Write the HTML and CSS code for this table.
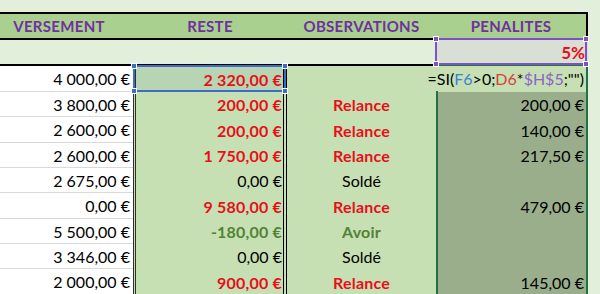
FILE: index.html
```html
<!DOCTYPE html>
<html lang="fr">
<head>
<meta charset="utf-8">
<title>Pénalités</title>
<link rel="stylesheet" href="styles.css">
</head>
<body>
<div class="sheet">
  <div class="cell hd hd-a">VERSEMENT</div>
  <div class="cell hd">RESTE</div>
  <div class="cell hd">OBSERVATIONS</div>
  <div class="cell hd hd-last">PENALITES</div>

  <div class="cell rate"></div>
  <div class="cell rate"></div>
  <div class="cell rate"></div>
  <div class="cell rate rate-h">5%<span class="ref ref-purple"><i class="hdl tl"></i><i class="hdl tr"></i><i class="hdl bl"></i><i class="hdl br"></i></span></div>

  <div class="cell a">4 000,00 €</div>
  <div class="cell f f-ref red">2 320,00 €<span class="ref ref-blue"><i class="hdl tl"></i><i class="hdl tr"></i><i class="hdl bl"></i><i class="hdl br"></i></span></div>
  <div class="cell g"></div>
  <div class="cell h h-active"><span class="editor">=SI(<span class="fb">F6</span>&gt;0;<span class="fr">D6</span>*<span class="fp">$H$5</span>;"")</span></div>

  <div class="cell a">3 800,00 €</div>
  <div class="cell f red">200,00 €</div>
  <div class="cell g red">Relance</div>
  <div class="cell h">200,00 €</div>

  <div class="cell a">2 600,00 €</div>
  <div class="cell f red">200,00 €</div>
  <div class="cell g red">Relance</div>
  <div class="cell h">140,00 €</div>

  <div class="cell a">2 600,00 €</div>
  <div class="cell f red">1 750,00 €</div>
  <div class="cell g red">Relance</div>
  <div class="cell h">217,50 €</div>

  <div class="cell a">2 675,00 €</div>
  <div class="cell f">0,00 €</div>
  <div class="cell g">Soldé</div>
  <div class="cell h"></div>

  <div class="cell a">0,00 €</div>
  <div class="cell f red">9 580,00 €</div>
  <div class="cell g red">Relance</div>
  <div class="cell h">479,00 €</div>

  <div class="cell a">5 500,00 €</div>
  <div class="cell f green">-180,00 €</div>
  <div class="cell g green">Avoir</div>
  <div class="cell h"></div>

  <div class="cell a">3 346,00 €</div>
  <div class="cell f">0,00 €</div>
  <div class="cell g">Soldé</div>
  <div class="cell h"></div>

  <div class="cell a">2 000,00 €</div>
  <div class="cell f red">900,00 €</div>
  <div class="cell g red">Relance</div>
  <div class="cell h">145,00 €</div>
</div>
</body>
</html>
```

FILE: styles.css
```css
html, body {
  margin: 0;
  padding: 0;
}
body {
  background: #e2efda;
  font-family: Lato, "Liberation Sans", sans-serif;
  font-size: 16px;
  color: #000;
  overflow: hidden;
}
.sheet {
  display: grid;
  grid-template-columns: 133px 154px 149px 152px;
  grid-template-rows: 28px 26px 26px 25px 26px 25px 25px 26px 25px 25px 26px;
  padding-top: 12px;
  width: 588px;
}
.cell {
  box-sizing: border-box;
  display: flex;
  align-items: center;
  justify-content: flex-end;
  padding-right: 3px;
  white-space: nowrap;
  min-width: 0;
}
.hd {
  background: #a9d08e;
  border-top: 2px solid #000;
  border-bottom: 2px solid #000;
  justify-content: center;
  padding: 0;
  color: #7030a0;
  font-weight: 700;
  font-size: 15px;
  letter-spacing: 0.3px;
}
.hd-a {
  padding-right: 15px;
}
.hd-last {
  border-right: 2px solid #000;
}
.rate {
  background: #e2efda;
  border-bottom: 2px solid #000;
}
.rate-h {
  position: relative;
  background: #dadfd5;
  border-bottom-color: #217346;
  color: #e60f1a;
  font-weight: 700;
  font-size: 17px;
  padding-right: 3px;
}
.a {
  background: #fff;
  border-bottom: 1px solid #d9d9d9;
}
.f {
  background: #c6e0b4;
  border-left: 3px double #2e2e2e;
  border-right: 4px double #000;
  padding-right: 1px;
}
.f-ref {
  position: relative;
  background: #b7d5b2;
}
.g {
  background: #c6e0b4;
  justify-content: center;
  padding: 0;
}
.h {
  position: relative;
  background: #9aae8c;
  border-left: 2px solid #217346;
  border-right: 2px solid #217346;
  padding-right: 2px;
}
.h-active {
  background: #c6e0b4;
}
.red {
  color: #e60f1a;
  font-weight: 700;
  letter-spacing: 0.2px;
}
.green {
  color: #548235;
  font-weight: 700;
  letter-spacing: 0.2px;
}
.ref {
  position: absolute;
  z-index: 2;
  border: 2px solid;
}
.ref-blue {
  color: #3b6cc8;
  border-color: #3b6cc8;
  left: -3px;
  right: -3px;
  top: -1px;
  bottom: 0;
}
.ref-purple {
  color: #7d52c4;
  border-color: #7d52c4;
  left: -1px;
  right: 1px;
  top: -2px;
  bottom: -1px;
}
.hdl {
  position: absolute;
  width: 4px;
  height: 4px;
  background: currentColor;
  border: 1px solid #fff;
}
.hdl.tl { left: -4px; top: -4px; }
.hdl.tr { right: -4px; top: -4px; }
.hdl.bl { left: -4px; bottom: -4px; }
.hdl.br { right: -4px; bottom: -4px; }
.editor {
  position: absolute;
  left: -10px;
  right: 0;
  top: 0;
  bottom: 1px;
  background: #c6e0b4;
  display: flex;
  align-items: center;
  justify-content: flex-end;
  padding-right: 2px;
  color: #000;
  font-weight: 400;
  letter-spacing: 0;
}
.fb { color: #3f7fd6; }
.fr { color: #d6403a; }
.fp { color: #8a63c9; }
```
